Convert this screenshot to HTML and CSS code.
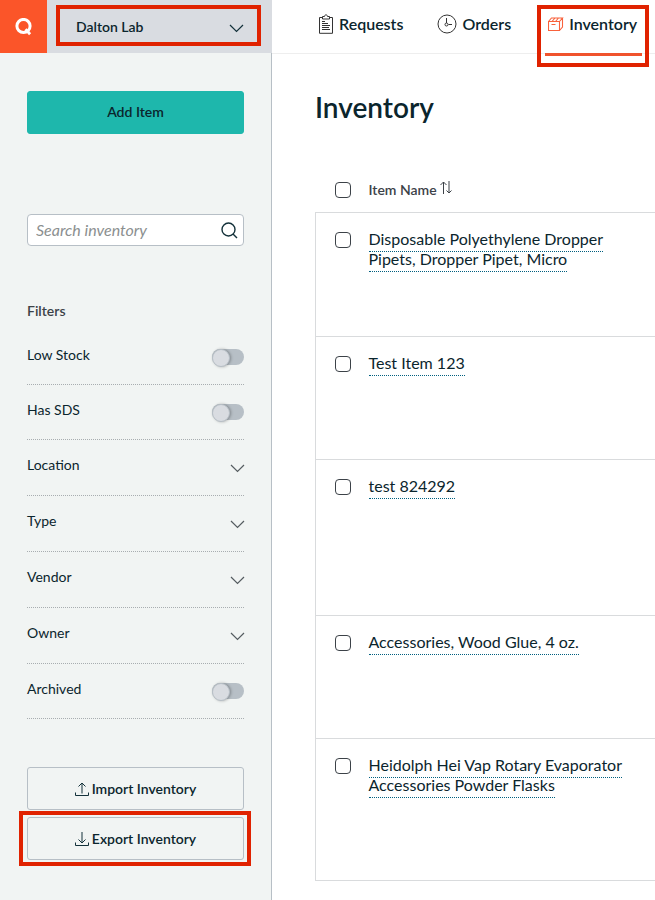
FILE: index.html
```html
<!DOCTYPE html>
<html lang="en">
<head>
    <meta charset="UTF-8">
    <meta name="viewport" content="width=device-width, initial-scale=1.0">
    <title>Inventory</title>
    <link rel="stylesheet" href="styles.css">
</head>
<body>
    <header class="topbar">
        <div class="lab-bar">
            <a class="logo" href="#" aria-label="Home">
                <svg width="18" height="18" viewBox="0 0 18 18" fill="none" stroke="#fff">
                    <circle cx="8.5" cy="8" r="6.6" stroke-width="3"/>
                    <path d="M10.5 11.2l4.6 5" stroke-width="2.8"/>
                </svg>
            </a>
            <div class="lab-select highlight">
                <select aria-label="Lab">
                    <option>Dalton Lab</option>
                </select>
                <svg class="chevron" width="15" height="9" viewBox="0 0 15 9"><path d="M1 1l6.5 6.5L14 1"/></svg>
            </div>
        </div>
        <nav class="main-nav">
            <a href="#">
                <svg width="16" height="20" viewBox="0 0 16 20" fill="none" stroke="#333">
                    <path d="M4.5 3.5h-3v15.8h13V3.5h-3M4.5 5V2.5h2c0-2.2 3-2.2 3 0h2V5zM4 7.5h3M4 9.5h6M4 11.5h8M4 13.5h7M4 15.5h8"/>
                </svg>
                Requests
            </a>
            <a href="#">
                <svg width="20" height="20" viewBox="0 0 20 20" fill="none" stroke="#333">
                    <circle cx="10" cy="10" r="9"/>
                    <path d="M9.5 4v5M11.5 10.5H15"/>
                    <circle cx="9.5" cy="10.5" r="1.5"/>
                </svg>
                Orders
            </a>
            <a class="active highlight" href="#">
                <svg width="16" height="16" viewBox="0 0 16 16" fill="none" stroke="#f8623c">
                    <path d="M.5 5.500h11v9H.5zM.5 5.500l3-3.500h11l-3 3.500M14.500 2v9l-3 3.500M4 5.500L7 2M7.500 5.500l3-3.500M3.500 8.500h4" stroke-width="1.1"/>
                </svg>
                Inventory
            </a>
        </nav>
    </header>

    <div class="page">
        <aside class="sidebar">
            <button class="btn btn-primary" type="button">Add Item</button>

            <div class="search">
                <input type="search" placeholder="Search inventory" aria-label="Search inventory">
                <svg width="17" height="17" viewBox="0 0 17 17" fill="none" stroke="#13313a" stroke-width="1.4">
                    <circle cx="7.5" cy="7.5" r="6.5"/>
                    <path d="M12 12l4 4"/>
                </svg>
            </div>

            <h2>Filters</h2>
            <div class="filters">
                <label class="filter toggle">Low Stock <input type="checkbox"></label>
                <label class="filter toggle">Has SDS <input type="checkbox"></label>
                <button class="filter" type="button">Location
                    <svg class="chevron" width="15" height="9" viewBox="0 0 15 9"><path d="M1 1l6.5 6.5L14 1"/></svg>
                </button>
                <button class="filter" type="button">Type
                    <svg class="chevron" width="15" height="9" viewBox="0 0 15 9"><path d="M1 1l6.5 6.5L14 1"/></svg>
                </button>
                <button class="filter" type="button">Vendor
                    <svg class="chevron" width="15" height="9" viewBox="0 0 15 9"><path d="M1 1l6.5 6.5L14 1"/></svg>
                </button>
                <button class="filter" type="button">Owner
                    <svg class="chevron" width="15" height="9" viewBox="0 0 15 9"><path d="M1 1l6.5 6.5L14 1"/></svg>
                </button>
                <label class="filter toggle">Archived <input type="checkbox"></label>
            </div>

            <div class="transfer">
                <button class="btn" type="button">
                    <svg width="14" height="14" viewBox="0 0 14 14"><path d="M.5 10.5v3h13v-3M7 11.5V1M3.5 4.5L7 1l3.5 3.5"/></svg>
                    Import Inventory
                </button>
                <button class="btn highlight" type="button">
                    <svg width="14" height="14" viewBox="0 0 14 14"><path d="M.5 10.5v3h13v-3M7 0v11M3.5 7.5L7 11l3.5-3.5"/></svg>
                    Export Inventory
                </button>
            </div>
        </aside>

        <main>
            <h1>Inventory</h1>
            <table>
                <thead>
                    <tr>
                        <th class="check"><input type="checkbox" aria-label="Select all"></th>
                        <th>Item Name
                            <svg class="sort" width="12" height="14" viewBox="0 0 12 14"><path d="M3.5 13V1M.5 4l3-3 3 3M9 0v12M6.5 9.5L9 12l2.5-2.5"/></svg>
                        </th>
                    </tr>
                </thead>
                <tbody>
                    <tr>
                        <td class="check"><input type="checkbox" aria-label="Select Disposable Polyethylene Dropper Pipets"></td>
                        <td><div class="name"><a href="#">Disposable Polyethylene Dropper Pipets, Dropper Pipet, Micro</a></div></td>
                    </tr>
                    <tr>
                        <td class="check"><input type="checkbox" aria-label="Select Test Item 123"></td>
                        <td><div class="name"><a href="#">Test Item 123</a></div></td>
                    </tr>
                    <tr class="tall">
                        <td class="check"><input type="checkbox" aria-label="Select test 824292"></td>
                        <td><div class="name"><a href="#">test 824292</a></div></td>
                    </tr>
                    <tr>
                        <td class="check"><input type="checkbox" aria-label="Select Accessories, Wood Glue"></td>
                        <td><div class="name"><a href="#">Accessories, Wood Glue, 4 oz.</a></div></td>
                    </tr>
                    <tr class="medium">
                        <td class="check"><input type="checkbox" aria-label="Select Heidolph Hei Vap Rotary Evaporator"></td>
                        <td><div class="name"><a href="#">Heidolph Hei Vap Rotary Evaporator Accessories Powder Flasks</a></div></td>
                    </tr>
                </tbody>
            </table>
        </main>
    </div>
</body>
</html>
```
FILE: styles.css
```css
* {
    box-sizing: border-box;
}
body {
    margin: 0;
    min-height: 100vh;
    display: flex;
    flex-direction: column;
    font-family: Lato, sans-serif;
    font-size: 14px;
    line-height: 20px;
    color: #0b252d;
    background: #fff;
}
button, input, select {
    font: inherit;
    color: inherit;
}
a {
    color: inherit;
    text-decoration: none;
}
svg {
    flex: none;
}

/* red call-out frames */
.highlight {
    position: relative;
}
.highlight::after {
    content: "";
    position: absolute;
    border: 4px solid #e02200;
    pointer-events: none;
}

/* top bar */
.topbar {
    display: flex;
    height: 53px;
}
.lab-bar {
    display: flex;
    flex: none;
    width: 272px;
    background: #d9dce1;
}
.logo {
    display: flex;
    align-items: center;
    justify-content: center;
    width: 47px;
    background: #fb5529;
}
.lab-select {
    flex: 1;
    display: flex;
    align-items: center;
}
.lab-select::after {
    inset: 5px 11px 7px 9px;
}
.lab-select select {
    width: 100%;
    height: 100%;
    padding: 0 56px 0 29px;
    border: 0;
    background: none;
    appearance: none;
    font-weight: 600;
}
.lab-select .chevron {
    position: absolute;
    right: 28px;
    top: 24px;
    pointer-events: none;
    stroke: #13313a;
}
.chevron {
    fill: none;
    stroke: #555c60;
    stroke-width: 1.2;
}
.main-nav {
    flex: 1;
    display: flex;
    gap: 34px;
    padding-left: 46px;
    box-shadow: 0 1px #eee;
    font-size: 16px;
    font-weight: 600;
    white-space: nowrap;
}
.main-nav a {
    display: flex;
    align-items: center;
    gap: 5px;
    height: 48px;
}
.main-nav .active {
    height: 56px;
    padding: 0 5px 5px 3px;
    border-bottom: 3px solid #f0532d;
}
.main-nav .active::after {
    inset: 5px -7px -14px -8px;
}

/* sidebar */
.page {
    flex: 1;
    display: flex;
}
.sidebar {
    flex: none;
    width: 272px;
    padding: 38px 27px 32px;
    background: #f1f4f3;
    border-right: 1px solid #b7bfc6;
}
.btn {
    display: flex;
    align-items: center;
    justify-content: center;
    gap: 3px;
    width: 100%;
    height: 43px;
    padding: 0;
    border: 1px solid #b7bfc6;
    border-radius: 3px;
    background: none;
    font-weight: 600;
}
.btn svg {
    fill: none;
    stroke: #13313a;
}
.btn-primary {
    padding-bottom: 2px;
    border-color: #1eb7ac;
    background: #1eb7ac;
}
.search {
    display: flex;
    align-items: center;
    height: 32px;
    margin: 80px 0 55px;
    padding: 0 5px 0 8px;
    background: #fff;
    border: 1px solid #b7bfc6;
    border-radius: 4px;
}
.search input {
    flex: 1;
    min-width: 0;
    padding: 0;
    border: 0;
    background: none;
    font-size: 16px;
}
.search input::placeholder {
    color: #8b8f90;
    font-style: italic;
}
h2 {
    margin: 0 0 24px;
    font-size: 14px;
    font-weight: 600;
    color: #3c4248;
}
.filter {
    display: flex;
    justify-content: space-between;
    width: 100%;
    padding: 15px 0 20px;
    border: 0;
    border-bottom: 1px dotted #a8adb0;
    background: none;
    text-align: left;
}
.filter.toggle {
    padding-bottom: 19px;
}
.filter .chevron {
    margin: 9px -1px 0 0;
}
.filter.toggle:first-child {
    padding-top: 0;
}
.toggle input {
    appearance: none;
    width: 32px;
    height: 16px;
    margin: 4px 0 0;
    border-radius: 8px;
    background: #b7bfc6;
}
.toggle input::before {
    content: "";
    display: block;
    width: 16px;
    height: 16px;
    border: 1px solid #b7bfc6;
    border-radius: 50%;
    background: #d9dce1;
    box-shadow: 1px 0 3px rgba(0, 0, 0, 0.3);
}
.toggle input:checked::before {
    margin-left: 16px;
}
.transfer {
    display: flex;
    flex-direction: column;
    gap: 7px;
    margin-top: 48px;
}
.transfer .highlight::after {
    inset: -7px -8px -7px -9px;
}

/* inventory list */
main {
    flex: 1;
    min-width: 0;
    padding: 36px 0 20px 43px;
}
h1 {
    margin: 0 0 55px;
    font-size: 28px;
    font-weight: 600;
    line-height: 36px;
}
table {
    width: 100%;
    border-collapse: collapse;
}
th {
    height: 32px;
    padding: 0;
    color: #3c4248;
    font-weight: 600;
    text-align: left;
    vertical-align: top;
}
.sort {
    fill: none;
    stroke: #3c4248;
}
tbody {
    border-left: 1px solid #d9dbdd;
}
tbody tr {
    height: 123px;
    border-top: 1px solid #d9dbdd;
    border-bottom: 1px solid #d9dbdd;
}
tbody tr:first-child {
    height: 124px;
}
tbody .medium {
    height: 142px;
}
tbody .tall {
    height: 156px;
}
td {
    padding: 16px 0;
    vertical-align: top;
    font-size: 16px;
}
.check {
    width: 53px;
    padding-left: 19px;
}
.check input {
    appearance: none;
    display: block;
    width: 16px;
    height: 16px;
    margin: 2px 0;
    border: 1px solid #3c4248;
    border-radius: 4px;
    background: #fff;
}
td.check input {
    margin-top: 3px;
}
.check input:checked {
    background: #1eb7ac;
}
.name {
    max-width: 264px;
}
.name a {
    padding-bottom: 3px;
    border-bottom: 1px dotted #005f7f;
}
```
